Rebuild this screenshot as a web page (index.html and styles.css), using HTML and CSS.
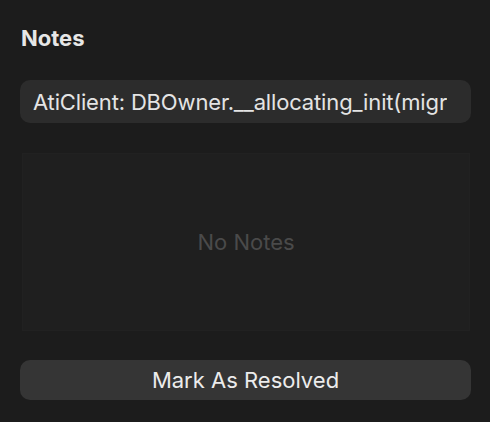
FILE: index.html
```html
<!DOCTYPE html>
<html>
<head>
<meta charset="utf-8">
<link rel="stylesheet" href="styles.css">
</head>
<body>
<div class="panel">
  <h1 class="title">Notes</h1>
  <div class="field"><span class="field-text">AtiClient: DBOwner.__allocating_init(migr</span></div>
  <div class="notes-box"><span class="empty">No Notes</span></div>
  <button class="resolve">Mark As Resolved</button>
</div>
</body>
</html>
```

FILE: styles.css
```css
html, body {
  margin: 0;
  padding: 0;
  background: #1c1c1c;
  width: 490px;
  height: 422px;
  overflow: hidden;
}
.panel {
  font-family: Inter, "Noto Sans", sans-serif;
  padding: 25px 19px 0 20px;
  display: flex;
  flex-direction: column;
}
.title {
  margin: 0 0 0 1px;
  font-size: 22px;
  font-weight: 700;
  color: #e6e6e6;
  line-height: 26px;
}
.field {
  margin-top: 29px;
  height: 43px;
  border-radius: 10px;
  background: #2c2c2c;
  display: flex;
  align-items: center;
  padding: 0 6px 0 13px;
  overflow: hidden;
}
.field-text {
  font-size: 22px;
  letter-spacing: -0.15px;
  color: #e4e4e4;
  white-space: nowrap;
  overflow: hidden;
}
.notes-box {
  margin: 30px 1px 0 2px;
  height: 176px;
  background: #1f1f1f;
  border: 1px solid #212121;
  display: flex;
  align-items: center;
  justify-content: center;
}
.empty {
  font-size: 22px;
  color: #4a4a4a;
}
.resolve {
  margin-top: 29px;
  height: 40px;
  border: none;
  border-radius: 10px;
  background: #353535;
  color: #ececec;
  font-family: Inter, "Noto Sans", sans-serif;
  font-size: 22px;
  padding: 0;
}
```
